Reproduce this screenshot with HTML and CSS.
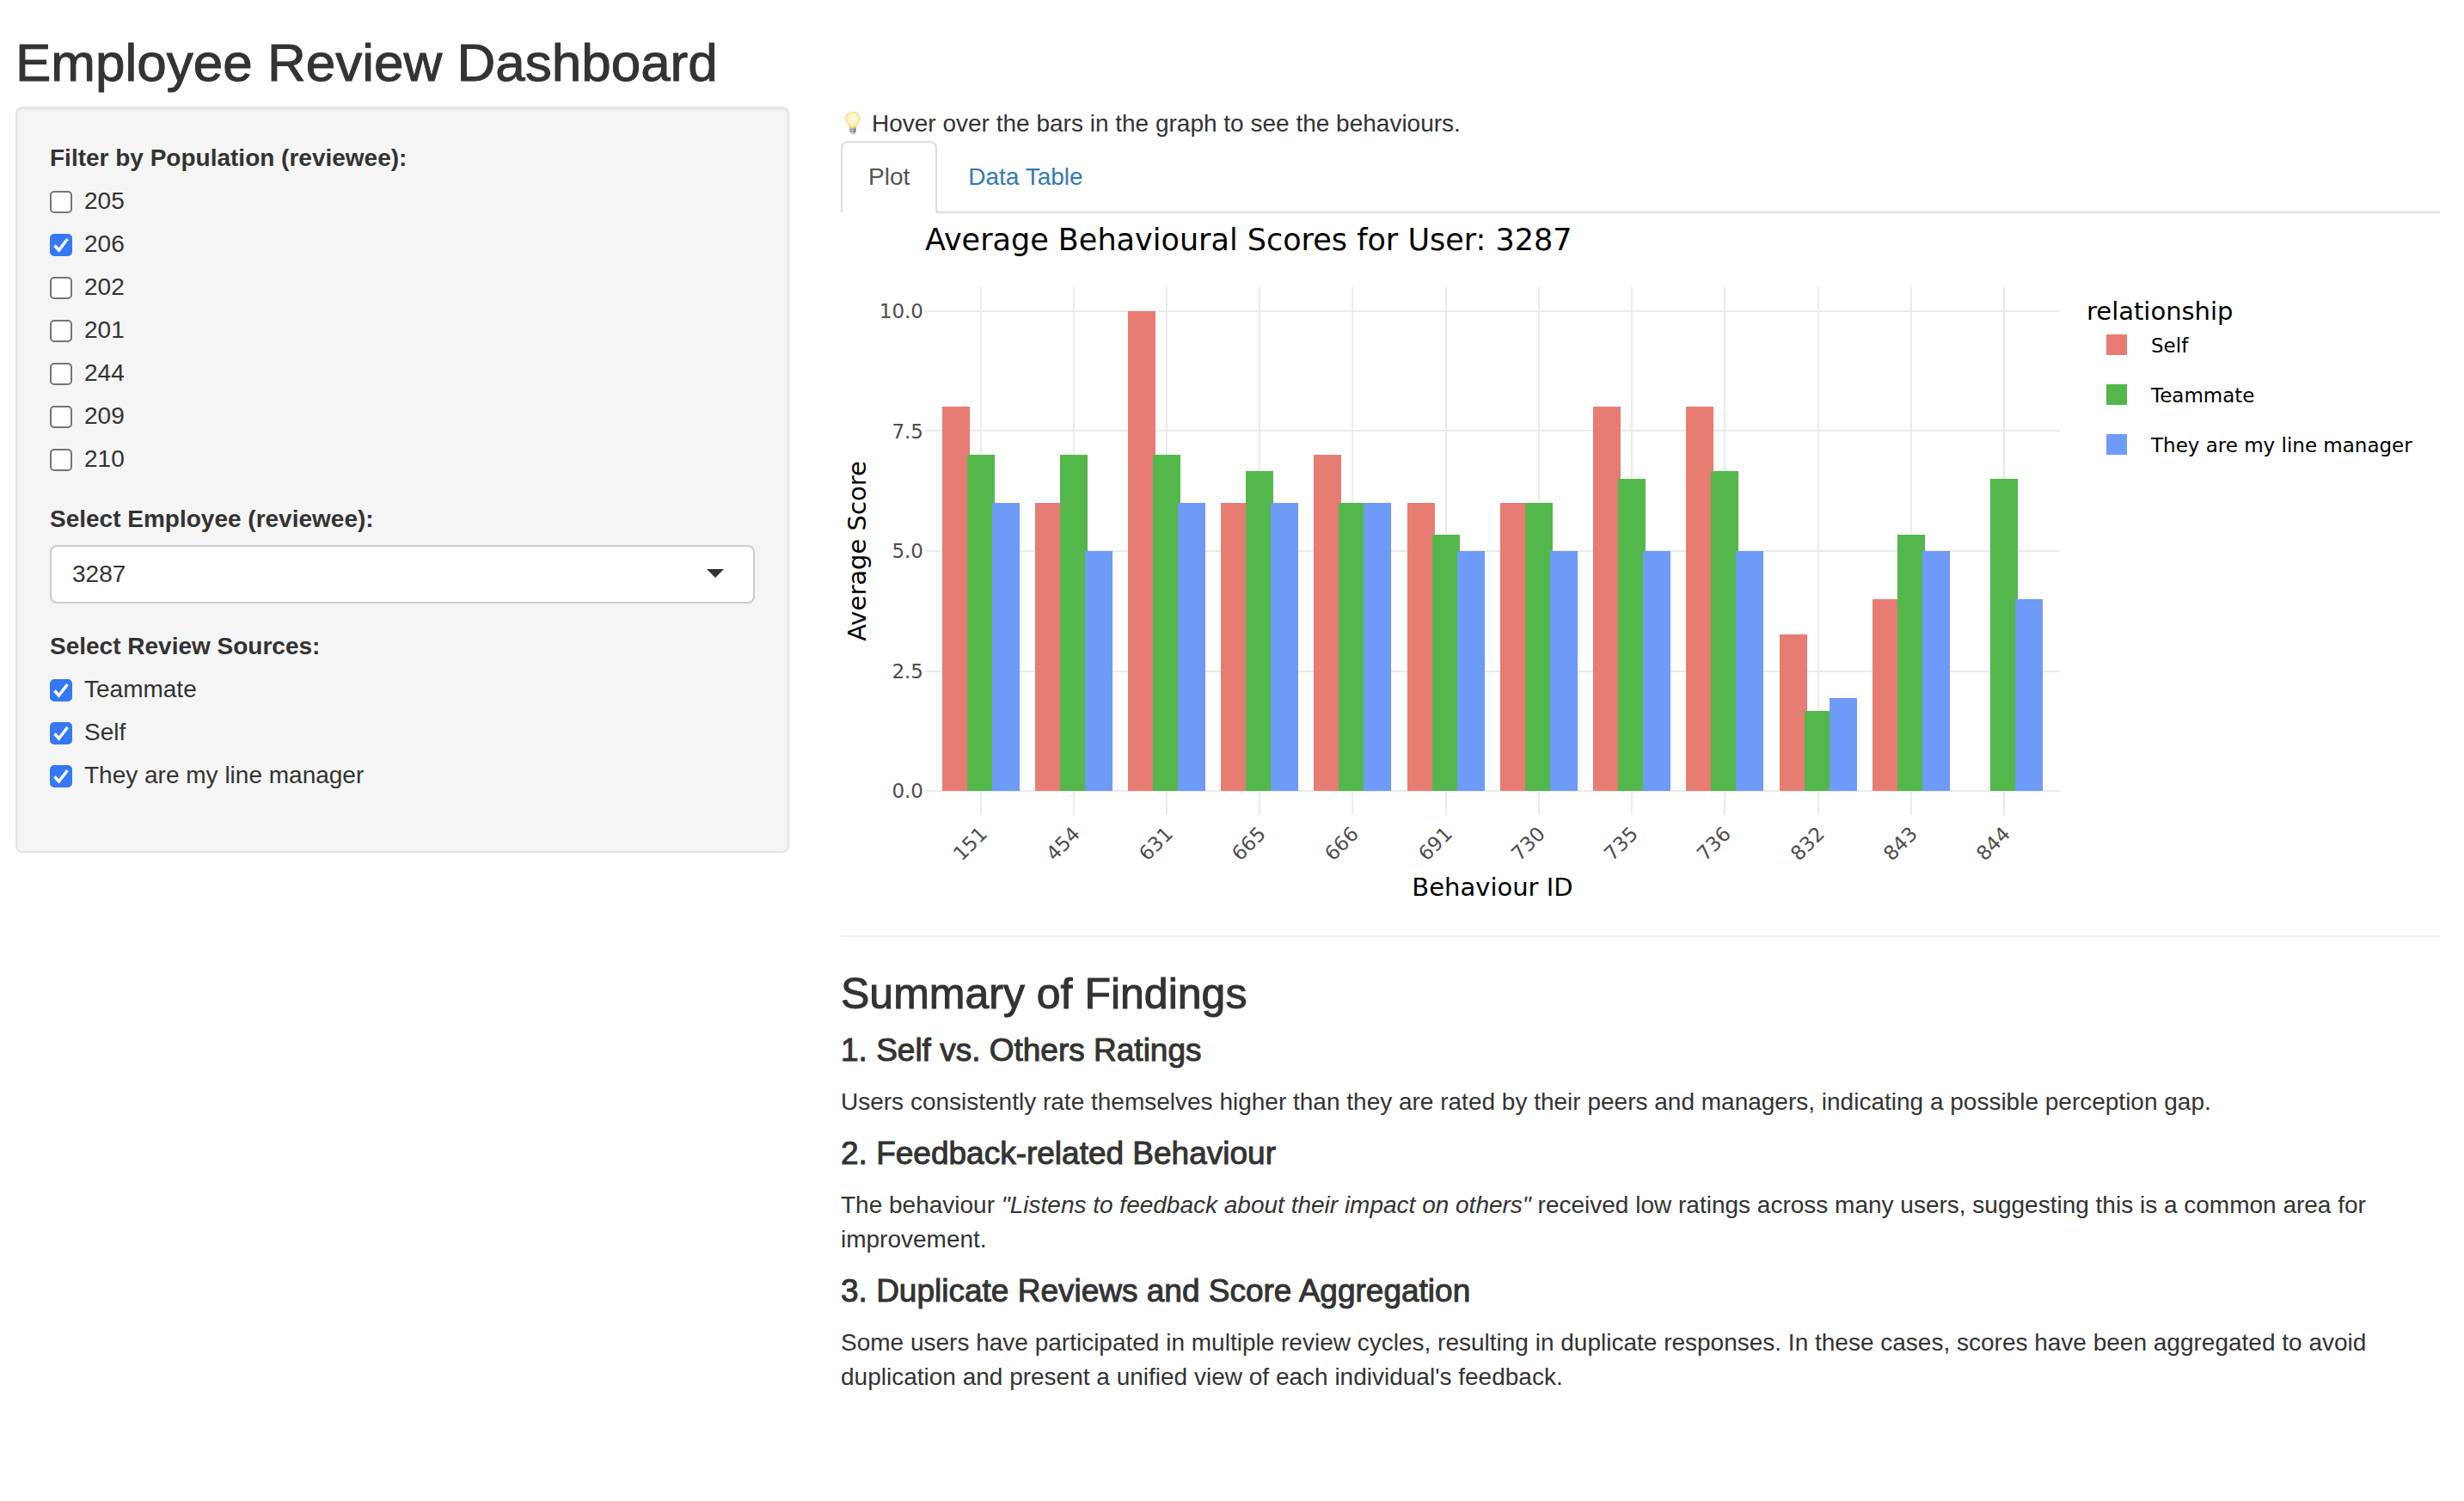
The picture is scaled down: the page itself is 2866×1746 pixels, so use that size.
FILE: index.html
```html
<!DOCTYPE html>
<html lang="en">
<head>
<meta charset="utf-8">
<title>Employee Review Dashboard</title>
<link rel="stylesheet" href="styles.css">
</head>
<body>
<h1 class="page-title">Employee Review Dashboard</h1>
<div class="layout">
  <form class="well">
    <fieldset class="form-group">
      <legend class="control-label">Filter by Population (reviewee):</legend>
      <label class="checkbox"><input type="checkbox" name="population" value="205">205</label>
      <label class="checkbox"><input type="checkbox" name="population" value="206" checked>206</label>
      <label class="checkbox"><input type="checkbox" name="population" value="202">202</label>
      <label class="checkbox"><input type="checkbox" name="population" value="201">201</label>
      <label class="checkbox"><input type="checkbox" name="population" value="244">244</label>
      <label class="checkbox"><input type="checkbox" name="population" value="209">209</label>
      <label class="checkbox"><input type="checkbox" name="population" value="210">210</label>
    </fieldset>
    <div class="form-group">
      <label class="control-label" for="employee">Select Employee (reviewee):</label>
      <select class="form-select" id="employee"><option>3287</option></select>
    </div>
    <fieldset class="form-group">
      <legend class="control-label">Select Review Sources:</legend>
      <label class="checkbox"><input type="checkbox" name="source" value="Teammate" checked>Teammate</label>
      <label class="checkbox"><input type="checkbox" name="source" value="Self" checked>Self</label>
      <label class="checkbox"><input type="checkbox" name="source" value="Manager" checked>They are my line manager</label>
    </fieldset>
  </form>

  <main class="main">
    <div class="hint">
      <svg class="bulb" viewBox="0 0 28 32" aria-hidden="true">
        <defs>
          <radialGradient id="glass" cx="50%" cy="45%" r="55%">
            <stop offset="0" stop-color="#fffef4"/>
            <stop offset="0.6" stop-color="#fdf3c4"/>
            <stop offset="1" stop-color="#f4d67c"/>
          </radialGradient>
          <linearGradient id="metal">
            <stop offset="0" stop-color="#8b8b87"/>
            <stop offset="0.4" stop-color="#d6d6d2"/>
            <stop offset="1" stop-color="#6f6f6b"/>
          </linearGradient>
        </defs>
        <path d="M14 2C9 2 5.500 5.500 5.500 10c0 4.500 3.500 6 4.500 10.500h8C19 16 22.500 14.500 22.500 10c0-4.500-3.500-8-8.500-8z" fill="url(#glass)" stroke="#f1d88c" stroke-width="0.600"/>
        <path d="M12.500 20l-1-7 2.500 1 2.500-1-1 7" fill="none" stroke="#f7e9b4" stroke-width="0.600"/>
        <path d="M10.500 20.500h7v4.500l-1.500 2.500-2 1-2-1-1.500-2.500z" fill="url(#metal)"/>
        <path d="M10.500 22.500h7M10.500 24.800h7" stroke="#777" stroke-width="0.600"/>
      </svg>
      <span>Hover over the bars in the graph to see the behaviours.</span>
    </div>
    <nav class="tabs">
      <a class="tab tab-active" href="#plot" aria-current="page">Plot</a>
      <a class="tab" href="#table">Data Table</a>
    </nav>
    <svg class="chart" id="plot" viewBox="0 0 1860 800" role="img" aria-label="Average Behavioural Scores for User: 3287">
      <text class="chart-title" x="98" y="43">Average Behavioural Scores for User: 3287</text>
      <path class="grid" d="M98 114H1418M98 253H1418M98 393H1418M98 533H1418M98 672H1418M163 86V700M271 86V700M379 86V700M487 86V700M595 86V700M704 86V700M812 86V700M920 86V700M1028 86V700M1137 86V700M1245 86V700M1353 86V700"/>
      <g class="tick tick-y">
        <text x="96" y="122">10.0</text>
        <text x="96" y="262">7.5</text>
        <text x="96" y="401">5.0</text>
        <text x="96" y="541">2.5</text>
        <text x="96" y="680">0.0</text>
      </g>
      <g transform="translate(163)"><rect class="self" x="-45" y="225" width="32" height="447"/><rect class="mate" x="-16" y="281" width="32" height="391"/><rect class="boss" x="13" y="337" width="32" height="335"/><text class="tick tick-x" transform="translate(-7 739) rotate(-45)">151</text></g>
      <g transform="translate(271)"><rect class="self" x="-45" y="337" width="32" height="335"/><rect class="mate" x="-16" y="281" width="32" height="391"/><rect class="boss" x="13" y="393" width="32" height="279"/><text class="tick tick-x" transform="translate(-7 739) rotate(-45)">454</text></g>
      <g transform="translate(379)"><rect class="self" x="-45" y="114" width="32" height="558"/><rect class="mate" x="-16" y="281" width="32" height="391"/><rect class="boss" x="13" y="337" width="32" height="335"/><text class="tick tick-x" transform="translate(-7 739) rotate(-45)">631</text></g>
      <g transform="translate(487)"><rect class="self" x="-45" y="337" width="32" height="335"/><rect class="mate" x="-16" y="300" width="32" height="372"/><rect class="boss" x="13" y="337" width="32" height="335"/><text class="tick tick-x" transform="translate(-7 739) rotate(-45)">665</text></g>
      <g transform="translate(595)"><rect class="self" x="-45" y="281" width="32" height="391"/><rect class="mate" x="-16" y="337" width="32" height="335"/><rect class="boss" x="13" y="337" width="32" height="335"/><text class="tick tick-x" transform="translate(-7 739) rotate(-45)">666</text></g>
      <g transform="translate(704)"><rect class="self" x="-45" y="337" width="32" height="335"/><rect class="mate" x="-16" y="374" width="32" height="298"/><rect class="boss" x="13" y="393" width="32" height="279"/><text class="tick tick-x" transform="translate(-7 739) rotate(-45)">691</text></g>
      <g transform="translate(812)"><rect class="self" x="-45" y="337" width="32" height="335"/><rect class="mate" x="-16" y="337" width="32" height="335"/><rect class="boss" x="13" y="393" width="32" height="279"/><text class="tick tick-x" transform="translate(-7 739) rotate(-45)">730</text></g>
      <g transform="translate(920)"><rect class="self" x="-45" y="225" width="32" height="447"/><rect class="mate" x="-16" y="309" width="32" height="363"/><rect class="boss" x="13" y="393" width="32" height="279"/><text class="tick tick-x" transform="translate(-7 739) rotate(-45)">735</text></g>
      <g transform="translate(1028)"><rect class="self" x="-45" y="225" width="32" height="447"/><rect class="mate" x="-16" y="300" width="32" height="372"/><rect class="boss" x="13" y="393" width="32" height="279"/><text class="tick tick-x" transform="translate(-7 739) rotate(-45)">736</text></g>
      <g transform="translate(1137)"><rect class="self" x="-45" y="490" width="32" height="182"/><rect class="mate" x="-16" y="579" width="32" height="93"/><rect class="boss" x="13" y="564" width="32" height="108"/><text class="tick tick-x" transform="translate(-7 739) rotate(-45)">832</text></g>
      <g transform="translate(1245)"><rect class="self" x="-45" y="449" width="32" height="223"/><rect class="mate" x="-16" y="374" width="32" height="298"/><rect class="boss" x="13" y="393" width="32" height="279"/><text class="tick tick-x" transform="translate(-7 739) rotate(-45)">843</text></g>
      <g transform="translate(1353)"><rect class="mate" x="-16" y="309" width="32" height="363"/><rect class="boss" x="13" y="449" width="32" height="223"/><text class="tick tick-x" transform="translate(-7 739) rotate(-45)">844</text></g>
      <text class="axis-title centered" x="758" y="794">Behaviour ID</text>
      <text class="axis-title centered" transform="translate(29 393) rotate(-90)">Average Score</text>
      <text class="axis-title" x="1449" y="124">relationship</text>
      <rect class="self" x="1472" y="141" width="24" height="24"/>
      <rect class="mate" x="1472" y="199" width="24" height="24"/>
      <rect class="boss" x="1472" y="257" width="24" height="24"/>
      <g class="legend-text">
        <text x="1524" y="162">Self</text>
        <text x="1524" y="220">Teammate</text>
        <text x="1524" y="278">They are my line manager</text>
      </g>
    </svg>
    <hr class="rule">
    <section class="summary">
      <h2 class="section-title">Summary of Findings</h2>
      <h3 class="finding-title">1. Self vs. Others Ratings</h3>
      <p>Users consistently rate themselves higher than they are rated by their peers and managers, indicating a possible perception gap.</p>
      <h3 class="finding-title">2. Feedback-related Behaviour</h3>
      <p>The behaviour <em>"Listens to feedback about their impact on others"</em> received low ratings across many users, suggesting this is a common area for improvement.</p>
      <h3 class="finding-title">3. Duplicate Reviews and Score Aggregation</h3>
      <p>Some users have participated in multiple review cycles, resulting in duplicate responses. In these cases, scores have been aggregated to avoid duplication and present a unified view of each individual's feedback.</p>
    </section>
  </main>
</div>
</body>
</html>
```

FILE: styles.css
```css
* {
  box-sizing: border-box;
}

body {
  margin: 0;
  padding: 40px 28px 40px 18px;
  background: #fff;
  color: #333;
  font: 28px/40px "Helvetica Neue", "Liberation Sans", Arial, sans-serif;
}

h1, h2, h3, p {
  margin: 0;
}

.page-title,
.section-title,
.finding-title {
  font-weight: 500;
  -webkit-text-stroke: 1px #333;
}

.page-title {
  font-size: 62px;
  line-height: 66px;
  margin-bottom: 18px;
}

.layout {
  display: grid;
  grid-template-columns: 15fr 31fr;
  gap: 60px;
  align-items: start;
}

/* Sidebar */

.well {
  min-width: 0;
  padding: 38px 38px 68px;
  background: #f5f5f5;
  border: 2px solid #e3e3e3;
  border-radius: 8px;
  box-shadow: inset 0 2px 2px rgba(0, 0, 0, 0.05);
  display: flex;
  flex-direction: column;
  gap: 30px;
}

.form-group {
  min-width: 0;
  margin: 0;
  padding: 0;
  border: 0;
}

.control-label {
  display: block;
  padding: 0;
  margin-bottom: 10px;
  font-weight: bold;
}

.checkbox {
  display: flex;
  align-items: center;
  gap: 14px;
}

.checkbox + .checkbox {
  margin-top: 10px;
}

.checkbox input {
  appearance: none;
  width: 26px;
  height: 26px;
  margin: 2px 0 0;
  background: #fff;
  border: 2px solid #767676;
  border-radius: 5px;
}

.checkbox input:checked {
  border-color: #3478f6;
  background: #3478f6 url("data:image/svg+xml,%3Csvg xmlns='http://www.w3.org/2000/svg' viewBox='0 0 26 26'%3E%3Cpath d='M5.500 13.500l5 5.500L20.500 6' fill='none' stroke='white' stroke-width='3.500'/%3E%3C/svg%3E") center / 26px 26px no-repeat;
}

.form-select {
  appearance: none;
  display: block;
  width: 100%;
  height: 68px;
  padding: 0 24px;
  color: #333;
  font: inherit;
  border: 2px solid #ccc;
  border-radius: 8px;
  background: #fff url("data:image/svg+xml,%3Csvg xmlns='http://www.w3.org/2000/svg' viewBox='0 0 20 10'%3E%3Cpath d='M0 0h20L10 10z' fill='%23333'/%3E%3C/svg%3E") right 34px top 26px / 20px 10px no-repeat;
}

/* Main column */

.main {
  min-width: 0;
}

.hint {
  display: flex;
  align-items: center;
  gap: 8px;
}

.bulb {
  width: 28px;
  height: 32px;
}

.tabs {
  display: flex;
  gap: 4px;
  border-bottom: 2px solid #ddd;
}

.tab {
  margin-bottom: -2px;
  padding: 20px 30px;
  border: 2px solid transparent;
  border-radius: 8px 8px 0 0;
  color: #337ab7;
  text-decoration: none;
}

.tab-active {
  color: #555;
  background: #fff;
  border-color: #ddd #ddd #fff;
}

.chart {
  display: block;
  width: 100%;
  height: auto;
  font-family: Verdana, "DejaVu Sans", sans-serif;
}

.chart-title {
  font-size: 35px;
}

.axis-title {
  font-size: 29px;
}

.centered {
  text-anchor: middle;
}

.legend-text {
  font-size: 23px;
}

.tick {
  font-size: 23px;
  fill: #4d4d4d;
}

.tick-y {
  text-anchor: end;
}

.tick-x {
  text-anchor: middle;
}

.grid {
  stroke: #ebebeb;
  stroke-width: 2px;
}

.self {
  fill: #e77d72;
}

.mate {
  fill: #53b74c;
}

.boss {
  fill: #6e9af8;
}

.rule {
  margin: 40px 0;
  border: 0;
  border-top: 2px solid #eee;
}

.summary {
  display: flex;
  flex-direction: column;
  gap: 20px;
}

.section-title {
  font-size: 50px;
  line-height: 52px;
}

.finding-title {
  font-size: 37px;
  line-height: 40px;
}
```
